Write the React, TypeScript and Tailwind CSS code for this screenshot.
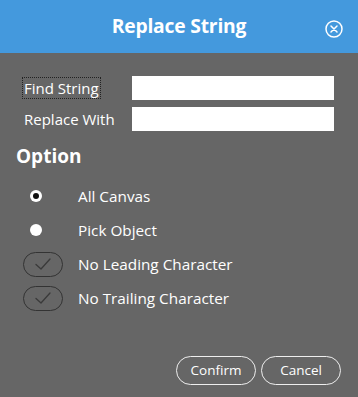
import React from "react";

function Radio({ checked }: { checked?: boolean }) {
  return (
    <span className="w-[12px] h-[12px] rounded-full bg-white flex items-center justify-center">
      {checked && <span className="w-[6px] h-[6px] rounded-full bg-[#111]" />}
    </span>
  );
}

function Check() {
  return (
    <span className="w-[40px] h-[25px] rounded-full border-[1.5px] border-[#333] flex items-center justify-center">
      <svg width="18" height="14" viewBox="0 0 18 14" fill="none">
        <path d="M2 7.5 L7 12 L16 2" stroke="#3a3a3a" strokeWidth="1.3" strokeLinecap="round" strokeLinejoin="round" />
      </svg>
    </span>
  );
}

export default function App() {
  const font = { fontFamily: '"Open Sans", "Noto Sans", sans-serif' };

  return (
    <div className="w-[358px] h-[397px] bg-[#666666] flex flex-col text-white" style={font}>
      {/* header */}
      <div className="h-[53px] bg-[#4499dd] flex items-center justify-center relative">
        <h1 className="text-[19.3px] font-bold tracking-[-0.2px] -mt-[1px]">Replace String</h1>
        <button className="absolute right-[15px] top-[20px] w-[18px] h-[18px]">
          <svg width="18" height="18" viewBox="0 0 18 18" fill="none">
            <circle cx="9" cy="9" r="8" stroke="white" strokeWidth="1.5" />
            <path d="M6 6 L12 12 M12 6 L6 12" stroke="white" strokeWidth="1.5" strokeLinecap="round" />
          </svg>
        </button>
      </div>

      {/* fields */}
      <div className="flex flex-col gap-[7px] mt-[23px] pl-[22px] pr-[24px]">
        <div className="flex items-center h-[24px]">
          <span className="w-[110px] text-[15px] leading-[20px]">
            <span className="border border-dotted border-[#222] px-[1px] inline-block">Find String</span>
          </span>
          <input className="flex-1 h-[24px] bg-white outline-none text-black px-1 text-sm" />
        </div>
        <div className="flex items-center h-[24px]">
          <span className="w-[110px] text-[15px] pl-[2px]">Replace With</span>
          <input className="flex-1 h-[24px] bg-white outline-none text-black px-1 text-sm" />
        </div>
      </div>

      <div className="pl-[16px] mt-[12px] text-[19px] font-bold leading-[26px]">Option</div>

      <div className="flex flex-col mt-[10px] text-[15.3px]">
        <div className="flex items-center h-[34px]">
          <span className="w-[78px] flex justify-center pr-[7px]"><Radio checked /></span>
          <span>All Canvas</span>
        </div>
        <div className="flex items-center h-[34px]">
          <span className="w-[78px] flex justify-center pr-[7px]"><Radio /></span>
          <span>Pick Object</span>
        </div>
        <div className="flex items-center h-[34px]">
          <span className="w-[78px] pl-[23px]"><Check /></span>
          <span>No Leading Character</span>
        </div>
        <div className="flex items-center h-[34px]">
          <span className="w-[78px] pl-[23px]"><Check /></span>
          <span>No Trailing Character</span>
        </div>
      </div>

      <div className="mt-auto mb-[12px] pr-[17px] flex justify-end gap-[5px] text-[13.5px]">
        <button className="w-[80px] h-[29px] rounded-full border border-[#eee]">Confirm</button>
        <button className="w-[80px] h-[29px] rounded-full border border-[#eee]">Cancel</button>
      </div>
    </div>
  );
}
